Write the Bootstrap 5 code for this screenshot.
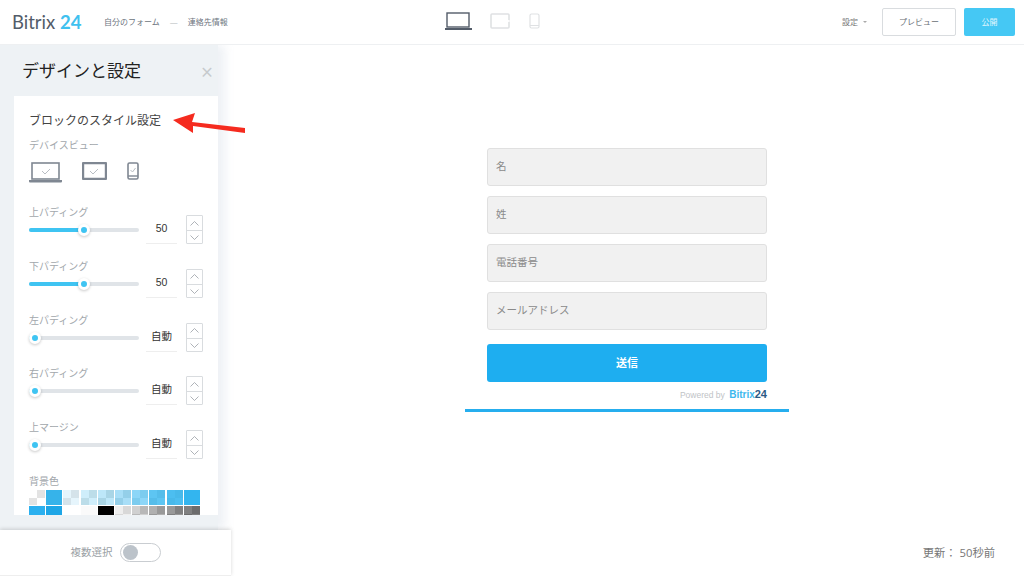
<!DOCTYPE html>
<html lang="ja">
<head>
<meta charset="utf-8">
<title>Bitrix 24</title>
<link href="https://cdn.jsdelivr.net/npm/bootstrap@5.3.0/dist/css/bootstrap.min.css" rel="stylesheet">
<style>
html,body{height:576px;overflow:hidden}
body{font-family:"Open Sans","Noto Sans CJK JP",sans-serif;color:#333;background:#fff;position:relative}
.topbar{height:45px;border-bottom:1px solid #eef0f2;padding:0 9px 0 12px;position:relative;z-index:3;background:#fff}
.logo{font-size:18.5px;line-height:1;color:#535c69;letter-spacing:0;width:92px;font-family:Lato,sans-serif}
.logo span{color:#3fc1ef;font-weight:700}
.crumbs{font-size:8px;color:#6d7580;gap:10px;width:200px}
.crumb-dash{color:#b5bac0}
.devices{position:absolute;left:445px;top:12px;gap:18px}
.set-link{font-size:8px;color:#777;margin-right:15px}
.caret-mini{width:0;height:0;border-left:2px solid transparent;border-right:2px solid transparent;border-top:2px solid #aaa;margin-left:5px}
.btn-prev,.btn-pub{height:28px;font-size:8px;border-radius:2px;padding:0;display:flex;align-items:center;justify-content:center}
.btn-prev{width:74px;border:1px solid #d9dcdf;color:#6a6f75;background:#fff;margin-right:8px}
.btn-pub{width:51px;border:0;background:#45c8f4;color:#e4f7fd}
.body-area{height:531px}
.side-col{width:231px;flex:none;z-index:2}
.panel{width:218px;background:#eef2f5;height:485px;box-shadow:7px 0 9px rgba(236,240,244,.9);padding:0 0 0 14px;flex:none}
.panel-head{height:51px;padding:0 5px 0 8px}
.panel-title{font-size:17px;color:#222;line-height:1}
.panel-x{font-size:21px;line-height:1;color:#c6cacd;margin-top:3px}
.set-card{background:#fff;width:204px;height:419px;overflow:hidden;padding:17px 15px 0}
.card-title-jp{font-size:12px;line-height:16px;color:#444;margin:0}
.sec-label{font-size:10px;line-height:14px;color:#a2a7ac}
.dev-label{margin-top:9px}
.dev-row{gap:20px;margin-top:10px;height:43px;align-items:flex-start}
.group{height:53.75px}
.group-left{width:148px}
.slide-line{gap:7px;height:25px;align-items:flex-start}
.track{width:110px;height:4px;background:#e0e4e8;border-radius:2px;position:relative;flex:none;margin-top:9px}
.track-fill{position:absolute;left:0;top:0;bottom:0;background:#3fc4f2;border-radius:2px}
.fill-half{width:55px}
.fill-none{width:6px}
.thumb{position:absolute;top:-4px;width:12px;height:12px;border-radius:50%;background:#3fc4f2;border:3px solid #fff;box-shadow:0 1px 3px rgba(0,0,0,.22)}
.thumb-half{left:49px}
.thumb-none{left:0}
.val{width:31px;height:25px;border-bottom:1px solid #eee;font-size:10.5px;color:#333;text-align:center;line-height:18px;font-family:"Liberation Sans","Noto Sans CJK JP",sans-serif}
.stepper{width:17px;margin-left:9px;margin-top:10px;height:29px;border:1px solid #d9dcdf;border-radius:1px;flex:none}
.step{height:14px;display:flex;align-items:center;justify-content:center}
.step+.step{border-top:1px solid #d9dcdf}
.swatches{display:grid;grid-template-columns:repeat(10,16px);column-gap:1.2px;row-gap:1px;grid-auto-rows:15px;margin-top:2px}
.sw{background:var(--a);background-image:conic-gradient(var(--b) 25%,var(--a) 0 50%,var(--b) 0 75%,var(--a) 0);background-size:16px 16px}
.s0{--a:#fff;--b:#e3e3e3}.s1{--a:#36b3ea;--b:#36b3ea}.s2{--a:#e6f5fc;--b:#d5e3ea}.s3{--a:#cfeefb;--b:#bcdde9}.s4{--a:#bde7f9;--b:#a9d5e6}.s5{--a:#a8def7;--b:#94cfe9}.s6{--a:#8cd6f8;--b:#7cccef}.s7{--a:#5dc5f2;--b:#55bdea}.s8{--a:#4cbef0;--b:#48b9ea}.s9{--a:#33b5ef;--b:#33b5ef}
.t0{--a:#2bb0ef;--b:#2bb0ef}.t1{--a:#1ea6e6;--b:#1ea6e6}.t2{--a:#fff;--b:#fff}.t3{--a:#fafafa;--b:#fafafa}.t4{--a:#000;--b:#000}.t5{--a:#eee;--b:#d8d8d8}.t6{--a:#d0d0d0;--b:#b8b8b8}.t7{--a:#b0b0b0;--b:#999}.t8{--a:#999;--b:#808080}.t9{--a:#808080;--b:#6c6c6c}
.multi{width:231px;height:46px;background:#fff;box-shadow:0 -1px 4px rgba(0,0,0,.16);position:relative;font-size:10.5px;color:#9a9fa5;gap:7px;border-bottom:1px solid #eee}
.toggle-box{width:41px;height:19px;border:1px solid #c9cdd1;border-radius:10px;padding:1px;background:#fff}
.toggle-dot{width:15px;height:15px;border-radius:50%;background:#bcc3ca;margin-left:1px}
.form-zone{flex:1;min-width:0}
.form-wrap{width:324px;padding-top:103px;margin-right:1px}
.fields{padding:0 22px;gap:10px}
.fld{height:38px;background:#f1f1f1;border:1px solid #e0e0e0;border-radius:3px;font-size:10.5px;padding:0 8px 3px;color:#666}
.fld::placeholder{color:#8a8a8a;opacity:1}
.send{height:38px;background:#1eaef0;border:0;border-radius:3px;color:#fff;font-size:11px;font-weight:700;padding:0}
.send:hover{background:#1eaef0;color:#fff}
.powered{font-size:8.5px;color:#c0c3c6;height:27px;padding:6px 22px 0 0;font-family:"Liberation Sans",sans-serif;line-height:12px}
.powered b{font-size:10px;color:#3cb8ee;margin-left:2px}
.powered i{font-style:normal;font-weight:700;font-size:11px;color:#2c5a85}
.rule{height:3px;background:#26aeee}
.updated{font-size:11.3px;color:#777;padding:0 29px 16px 0;margin-top:auto;line-height:14px}
.arrow{position:absolute;left:170px;top:110px;z-index:5}
</style>
</head>
<body>
<header class="topbar d-flex align-items-center">
  <div class="logo">Bitrix <span>24</span></div>
  <div class="crumbs d-flex align-items-center"><span>自分のフォーム</span><span class="crumb-dash">—</span><span>連絡先情報</span></div>
  <div class="devices d-flex align-items-start">
    <svg width="27" height="19" viewBox="0 0 27 19" fill="none"><rect x="2" y="1" width="22" height="14" stroke="#535c69" stroke-width="1.4"/><path d="M0 16h27v2H0z" fill="#535c69"/></svg>
    <svg width="20" height="16" viewBox="0 0 20 16" fill="none" style="margin-top:1px"><rect x="1" y="1" width="18" height="14" rx="1" stroke="#dfe1e3" stroke-width="1.6"/><circle cx="18.8" cy="8" r="1" fill="#fff"/></svg>
    <svg width="11" height="16" viewBox="0 0 11 16" fill="none" style="margin:1px 0 0 1px"><rect x="1" y="1" width="9" height="14" rx="1.5" stroke="#dfe1e3" stroke-width="1.2"/><path d="M1 12.5h9" stroke="#dfe1e3"/></svg>
  </div>
  <div class="ms-auto d-flex align-items-center">
    <span class="set-link d-flex align-items-center">設定<span class="caret-mini"></span></span>
    <button type="button" class="btn btn-prev">プレビュー</button>
    <button type="button" class="btn btn-pub">公開</button>
  </div>
</header>

<div class="body-area d-flex">
  <aside class="side-col d-flex flex-column">
    <div class="panel d-flex flex-column">
      <div class="panel-head d-flex align-items-center justify-content-between">
        <div class="panel-title">デザインと設定</div>
        <div class="panel-x">×</div>
      </div>
      <div class="set-card">
        <p class="card-title-jp">ブロックのスタイル設定</p>
        <div class="sec-label dev-label">デバイスビュー</div>
        <div class="dev-row d-flex">
          <svg width="33" height="21" viewBox="0 0 33 21" fill="none"><rect x="3" y="1" width="27" height="16" stroke="#7f8792" stroke-width="1.6"/><path d="M0 18h33v1.4a1 1 0 0 1-1 1H1a1 1 0 0 1-1-1z" fill="#7f8792"/><path d="M13 9l3 3 5-5" stroke="#b9bec4"/></svg>
          <svg width="25" height="18" viewBox="0 0 25 18" fill="none"><rect x="1" y="1" width="23" height="16" rx="1" stroke="#7f8792" stroke-width="2.4"/><path d="M8 9l3 3 5-5" stroke="#b9bec4"/></svg>
          <svg width="12" height="18" viewBox="0 0 12 18" fill="none"><rect x="1" y="1" width="10" height="16" rx="1.5" stroke="#7f8792" stroke-width="1.6"/><path d="M1 14h10" stroke="#7f8792" stroke-width="1.4"/><path d="M3.5 8l2 2 3-4" stroke="#b9bec4"/></svg>
        </div>

        <div class="group d-flex align-items-start">
          <div class="group-left"><div class="sec-label">上パディング</div>
            <div class="slide-line d-flex"><div class="track"><div class="track-fill fill-half"></div><div class="thumb thumb-half"></div></div><div class="val">50</div></div></div>
          <div class="stepper"><div class="step"><svg width="9" height="5" viewBox="0 0 9 5" fill="none"><path d="M.5 4.5l4-4 4 4" stroke="#9aa0a6" stroke-width=".8"/></svg></div><div class="step"><svg width="9" height="5" viewBox="0 0 9 5" fill="none"><path d="M.5.5l4 4 4-4" stroke="#9aa0a6" stroke-width=".8"/></svg></div></div>
        </div>
        <div class="group d-flex align-items-start">
          <div class="group-left"><div class="sec-label">下パディング</div>
            <div class="slide-line d-flex"><div class="track"><div class="track-fill fill-half"></div><div class="thumb thumb-half"></div></div><div class="val">50</div></div></div>
          <div class="stepper"><div class="step"><svg width="9" height="5" viewBox="0 0 9 5" fill="none"><path d="M.5 4.5l4-4 4 4" stroke="#9aa0a6" stroke-width=".8"/></svg></div><div class="step"><svg width="9" height="5" viewBox="0 0 9 5" fill="none"><path d="M.5.5l4 4 4-4" stroke="#9aa0a6" stroke-width=".8"/></svg></div></div>
        </div>
        <div class="group d-flex align-items-start">
          <div class="group-left"><div class="sec-label">左パディング</div>
            <div class="slide-line d-flex"><div class="track"><div class="track-fill fill-none"></div><div class="thumb thumb-none"></div></div><div class="val">自動</div></div></div>
          <div class="stepper"><div class="step"><svg width="9" height="5" viewBox="0 0 9 5" fill="none"><path d="M.5 4.5l4-4 4 4" stroke="#9aa0a6" stroke-width=".8"/></svg></div><div class="step"><svg width="9" height="5" viewBox="0 0 9 5" fill="none"><path d="M.5.5l4 4 4-4" stroke="#9aa0a6" stroke-width=".8"/></svg></div></div>
        </div>
        <div class="group d-flex align-items-start">
          <div class="group-left"><div class="sec-label">右パディング</div>
            <div class="slide-line d-flex"><div class="track"><div class="track-fill fill-none"></div><div class="thumb thumb-none"></div></div><div class="val">自動</div></div></div>
          <div class="stepper"><div class="step"><svg width="9" height="5" viewBox="0 0 9 5" fill="none"><path d="M.5 4.5l4-4 4 4" stroke="#9aa0a6" stroke-width=".8"/></svg></div><div class="step"><svg width="9" height="5" viewBox="0 0 9 5" fill="none"><path d="M.5.5l4 4 4-4" stroke="#9aa0a6" stroke-width=".8"/></svg></div></div>
        </div>
        <div class="group d-flex align-items-start">
          <div class="group-left"><div class="sec-label">上マージン</div>
            <div class="slide-line d-flex"><div class="track"><div class="track-fill fill-none"></div><div class="thumb thumb-none"></div></div><div class="val">自動</div></div></div>
          <div class="stepper"><div class="step"><svg width="9" height="5" viewBox="0 0 9 5" fill="none"><path d="M.5 4.5l4-4 4 4" stroke="#9aa0a6" stroke-width=".8"/></svg></div><div class="step"><svg width="9" height="5" viewBox="0 0 9 5" fill="none"><path d="M.5.5l4 4 4-4" stroke="#9aa0a6" stroke-width=".8"/></svg></div></div>
        </div>

        <div class="sec-label">背景色</div>
        <div class="swatches">
          <div class="sw s0"></div><div class="sw s1"></div><div class="sw s2"></div><div class="sw s3"></div><div class="sw s4"></div><div class="sw s5"></div><div class="sw s6"></div><div class="sw s7"></div><div class="sw s8"></div><div class="sw s9"></div>
          <div class="sw t0"></div><div class="sw t1"></div><div class="sw t2"></div><div class="sw t3"></div><div class="sw t4"></div><div class="sw t5"></div><div class="sw t6"></div><div class="sw t7"></div><div class="sw t8"></div><div class="sw t9"></div>
        </div>
      </div>
    </div>
    <div class="multi d-flex align-items-center justify-content-center">
      <span>複数選択</span>
      <div class="toggle-box"><div class="toggle-dot"></div></div>
    </div>
  </aside>

  <main class="form-zone d-flex flex-column align-items-center">
    <div class="form-wrap">
      <div class="fields d-flex flex-column">
        <input class="form-control fld" type="text" placeholder="名">
        <input class="form-control fld" type="text" placeholder="姓">
        <input class="form-control fld" type="text" placeholder="電話番号">
        <input class="form-control fld" type="text" placeholder="メールアドレス">
        <button type="button" class="btn send w-100 mt-1">送信</button>
      </div>
      <div class="powered text-end">Powered by <b>Bitrix</b><i>24</i></div>
      <div class="rule"></div>
    </div>
    <div class="updated w-100 text-end">更新： 50秒前</div>
  </main>
</div>

<svg class="arrow" width="78" height="26" viewBox="0 0 78 26" fill="none"><path d="M3 10L25 3l-3 9 53 6v5l-52-7v7z" fill="#f52b1f"/></svg>
<script src="https://cdn.jsdelivr.net/npm/bootstrap@5.3.0/dist/js/bootstrap.bundle.min.js"></script>
</body>
</html>
